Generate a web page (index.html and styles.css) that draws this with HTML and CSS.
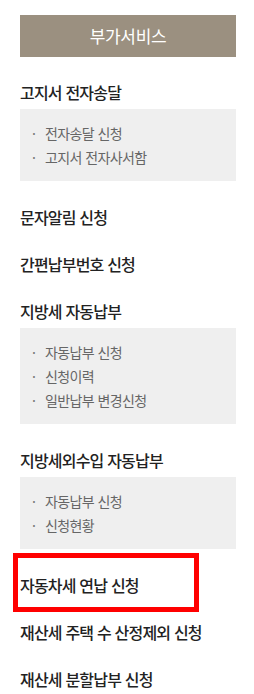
FILE: index.html
```html
<!DOCTYPE html>
<html lang="ko">
<head>
    <meta charset="UTF-8">
    <meta name="viewport" content="width=device-width, initial-scale=1.0">
    <title>부가서비스</title>
    <link rel="stylesheet" href="styles.css">
</head>
<body>
    <div class="lnb">
        <h2 class="lnb-title">부가서비스</h2>
        <ul class="menu">
            <li>
                <a href="#">고지서 전자송달</a>
                <ul class="sub">
                    <li><a href="#">전자송달 신청</a></li>
                    <li><a href="#">고지서 전자사서함</a></li>
                </ul>
            </li>
            <li><a href="#">문자알림 신청</a></li>
            <li><a href="#">간편납부번호 신청</a></li>
            <li>
                <a href="#">지방세 자동납부</a>
                <ul class="sub">
                    <li><a href="#">자동납부 신청</a></li>
                    <li><a href="#">신청이력</a></li>
                    <li><a href="#">일반납부 변경신청</a></li>
                </ul>
            </li>
            <li>
                <a href="#">지방세외수입 자동납부</a>
                <ul class="sub">
                    <li><a href="#">자동납부 신청</a></li>
                    <li><a href="#">신청현황</a></li>
                </ul>
            </li>
            <li class="marked">
                <a href="#">자동차세 연납 신청</a>
                <!-- highlight box -->
                <span class="mark"></span>
            </li>
            <li><a href="#">재산세 주택 수 산정제외 신청</a></li>
            <li><a href="#">재산세 분할납부 신청</a></li>
        </ul>
    </div>
</body>
</html>
```

FILE: styles.css
```css
body {
    margin: 0;
    padding: 0;
    font-family: "Noto Sans CJK KR", "Noto Sans", sans-serif;
    background: #fff;
}
a {
    text-decoration: none;
    color: inherit;
}
ul {
    list-style: none;
    margin: 0;
    padding: 0;
}
.lnb {
    width: 216px;
    margin: 15px 0 0 20px;
}
.lnb-title {
    margin: 0;
    height: 42px;
    line-height: 41px;
    background: #9b9080;
    color: #fff;
    text-align: center;
    font-size: 17px;
    font-weight: 400;
    letter-spacing: -0.3px;
}
.menu {
    margin-top: 12px;
}
.menu > li {
    position: relative;
    padding: 12px 0;
}
.menu > li > a {
    display: block;
    line-height: 23px;
    font-size: 16px;
    font-weight: 500;
    color: #222;
    letter-spacing: -0.8px;
    white-space: nowrap;
}
.sub {
    margin: 5px 0 1px;
    padding: 12px 0;
    background: #efefef;
}
.sub li {
    position: relative;
    padding-left: 25px;
    line-height: 24px;
    font-size: 14px;
    color: #666;
    letter-spacing: -0.6px;
}
.sub li::before {
    content: "·";
    position: absolute;
    left: 12px;
    top: 0;
    color: #777;
}
.mark {
    position: absolute;
    left: -7px;
    top: -9px;
    width: 176px;
    height: 49px;
    border: 5px solid #f00;
}
```
